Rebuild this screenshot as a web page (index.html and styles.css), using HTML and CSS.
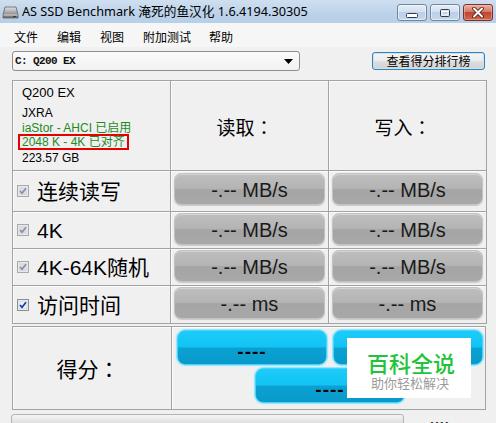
FILE: index.html
```html
<!DOCTYPE html>
<html lang="zh">
<head>
<meta charset="utf-8">
<title>AS SSD Benchmark</title>
<link rel="stylesheet" href="styles.css">
</head>
<body>
<div class="window">
  <div class="titlebar">
    <svg class="appicon" width="17" height="16" viewBox="0 0 17 16">
      <defs>
        <linearGradient id="hd" x1="0" y1="0" x2="0" y2="1">
          <stop offset="0" stop-color="#e4e4e4"/>
          <stop offset="0.6" stop-color="#9a9a9a"/>
          <stop offset="1" stop-color="#6a6a6a"/>
        </linearGradient>
      </defs>
      <path d="M3 3 L14 3 L16 11 L16 14 L1 14 L1 11 Z" fill="url(#hd)" stroke="#5f5f5f" stroke-width="0.8"/>
      <path d="M1.5 11 L15.5 11" stroke="#d8d8d8" stroke-width="1"/>
      <rect x="11" y="12" width="3" height="1" fill="#3a3a3a"/>
    </svg>
    <span class="title">AS SSD Benchmark 淹死的鱼汉化 1.6.4194.30305</span>
    <div class="winbtns">
      <div class="wb">
        <svg width="12" height="6" viewBox="0 0 12 6"><rect x="0.5" y="1.5" width="11" height="4" rx="1" fill="#fff" stroke="#2a3d55"/></svg>
      </div>
      <div class="wb">
        <svg width="12" height="10" viewBox="0 0 12 10"><rect x="1.5" y="1.5" width="9" height="7" rx="1" fill="none" stroke="#2a3d55" stroke-width="1"/><rect x="3" y="3.5" width="6" height="3.5" fill="none" stroke="#fff" stroke-width="1"/></svg>
      </div>
      <div class="wb close">
        <svg width="14" height="11" viewBox="0 0 14 11"><path d="M3 1.5 L11 9.5 M11 1.5 L3 9.5" stroke="#4a1a12" stroke-width="3.6" stroke-linecap="round"/><path d="M3 1.5 L11 9.5 M11 1.5 L3 9.5" stroke="#fff" stroke-width="2" stroke-linecap="round"/></svg>
      </div>
    </div>
  </div>

  <div class="menubar">
    <span class="mi">文件</span>
    <span class="mi">编辑</span>
    <span class="mi">视图</span>
    <span class="mi">附加测试</span>
    <span class="mi">帮助</span>
  </div>

  <div class="toolbar">
    <div class="combo">
      <span class="combo-text">C: Q200 EX</span>
      <svg class="arrow" width="9" height="5" viewBox="0 0 9 5"><path d="M0 0 L9 0 L4.5 5 Z" fill="#000"/></svg>
    </div>
    <div class="rank">查看得分排行榜</div>
  </div>

  <div class="results">
    <div class="cell info">
      <div class="model">Q200 EX</div>
      <div class="line">JXRA</div>
      <div class="line green">iaStor - AHCI 已启用</div>
      <div class="line green boxed">2048 K - 4K 已对齐</div>
      <div class="line">223.57 GB</div>
    </div>
    <div class="cell head">读取<span class="colon">：</span></div>
    <div class="cell head">写入<span class="colon">：</span></div>

    <div class="cell label">
      <svg class="chk" width="12" height="12" viewBox="0 0 12 12"><rect x="0.5" y="0.5" width="11" height="11" fill="#e8e8e8" stroke="#a9a9a9"/><rect x="2" y="2" width="8" height="8" fill="#dcdcdc"/><path d="M3 6 L5 8.3 L9 3.3" fill="none" stroke="#7d8db5" stroke-width="1.6"/></svg>
      <span>连续读写</span>
    </div>
    <div class="cell val first"><div class="gbtn">-.-- MB/s</div></div>
    <div class="cell val first"><div class="gbtn">-.-- MB/s</div></div>

    <div class="cell label">
      <svg class="chk" width="12" height="12" viewBox="0 0 12 12"><rect x="0.5" y="0.5" width="11" height="11" fill="#e8e8e8" stroke="#a9a9a9"/><rect x="2" y="2" width="8" height="8" fill="#dcdcdc"/><path d="M3 6 L5 8.3 L9 3.3" fill="none" stroke="#7d8db5" stroke-width="1.6"/></svg>
      <span>4K</span>
    </div>
    <div class="cell val"><div class="gbtn">-.-- MB/s</div></div>
    <div class="cell val"><div class="gbtn">-.-- MB/s</div></div>

    <div class="cell label">
      <svg class="chk" width="12" height="12" viewBox="0 0 12 12"><rect x="0.5" y="0.5" width="11" height="11" fill="#e8e8e8" stroke="#a9a9a9"/><rect x="2" y="2" width="8" height="8" fill="#dcdcdc"/><path d="M3 6 L5 8.3 L9 3.3" fill="none" stroke="#7d8db5" stroke-width="1.6"/></svg>
      <span>4K-64K随机</span>
    </div>
    <div class="cell val"><div class="gbtn">-.-- MB/s</div></div>
    <div class="cell val"><div class="gbtn">-.-- MB/s</div></div>

    <div class="cell label">
      <svg class="chk" width="12" height="12" viewBox="0 0 12 12"><rect x="0.5" y="0.5" width="11" height="11" fill="#f4f4f4" stroke="#8e8f8f"/><rect x="2" y="2" width="8" height="8" fill="#eaf0fa" stroke="#b9c7de" stroke-width="0.6"/><path d="M3 6 L5 8.3 L9 3.3" fill="none" stroke="#1f3f95" stroke-width="1.7"/></svg>
      <span>访问时间</span>
    </div>
    <div class="cell val"><div class="gbtn">-.-- ms</div></div>
    <div class="cell val"><div class="gbtn">-.-- ms</div></div>
  </div>

  <div class="score">
    <div class="cell score-label">得分<span class="colon">：</span></div>
    <div class="cell score-vals">
      <div class="brow">
        <div class="bbtn">----</div>
        <div class="bbtn">----</div>
      </div>
      <div class="brow second">
        <div class="bbtn">----</div>
      </div>
    </div>
  </div>

  <div class="bottom">
    <div class="progress"></div>
    <span class="tail">∙∙∙∙</span>
  </div>

  <div class="watermark">
    <div class="wm-main">百科全说</div>
    <div class="wm-sub">助你轻松解决</div>
  </div>
</div>
</body>
</html>
```

FILE: styles.css
```css
html, body {
  margin: 0;
  padding: 0;
}
body {
  background: #f0f0f0;
  font-family: "Liberation Sans", "Noto Sans CJK SC", sans-serif;
  color: #000;
}
.window {
  position: relative;
  width: 496px;
  height: 423px;
  overflow: hidden;
  background: #f0f0f0;
}

/* title bar */
.titlebar {
  height: 23px;
  display: flex;
  align-items: center;
  padding-left: 2px;
  background: linear-gradient(#cfdff0, #bcd2ea 60%, #b8cfe8);
}
.appicon {
  margin-right: 3px;
  margin-top: 1px;
}
.title {
  font-family: "Noto Sans", "Noto Sans CJK SC", sans-serif;
  font-size: 12.7px;
  line-height: 1;
  color: #000;
  white-space: nowrap;
}
.winbtns {
  margin-left: auto;
  margin-right: 3px;
  display: flex;
  gap: 3px;
  align-self: flex-start;
  margin-top: 4px;
}
.wb {
  width: 30px;
  height: 17px;
  box-sizing: border-box;
  border: 1px solid #71879f;
  border-radius: 3px;
  background: linear-gradient(#e6eef8, #d3e0ef 45%, #bccfe6 50%, #c6d7ec);
  box-shadow: inset 0 0 0 1px rgba(255,255,255,0.5);
  display: flex;
  align-items: center;
  justify-content: center;
}
.wb:first-child svg {
  margin-top: 5px;
}
.wb.close {
  border-color: #7a3127;
  background: linear-gradient(#eab0a3, #d67a66 45%, #c2442e 50%, #cf6a4e);
  box-shadow: inset 0 0 0 1px rgba(255,200,190,0.45);
}

/* menu */
.menubar {
  height: 24px;
  display: flex;
  align-items: center;
  padding-left: 4px;
  background: #f6f6f6;
}
.mi {
  font-family: "Noto Sans CJK SC", sans-serif;
  font-size: 12px;
  line-height: 1;
  padding: 0 10px;
  margin-top: 3px;
  margin-right: -1px;
}
.mi:nth-child(4) {
  margin-right: -2px;
}

/* toolbar */
.toolbar {
  margin-top: 4px;
  height: 20px;
  display: flex;
  align-items: center;
  padding-left: 12px;
}
.combo {
  width: 288px;
  height: 20px;
  box-sizing: border-box;
  border: 1px solid #8f8f8f;
  border-radius: 3px;
  background: linear-gradient(#fbfbfb, #f1f1f1);
  display: flex;
  align-items: center;
  padding: 0 3px 0 2px;
}
.combo-text {
  font-family: "Liberation Mono", monospace;
  font-size: 11px;
  letter-spacing: -0.6px;
  line-height: 1;
  font-weight: bold;
  color: #111;
}
.arrow {
  margin-left: auto;
  margin-right: 3px;
}
.rank {
  margin-left: 72px;
  width: 113px;
  height: 18px;
  box-sizing: border-box;
  border: 1px solid #3c7fb1;
  border-radius: 3px;
  background: linear-gradient(#f4f4f4, #ececec 48%, #dedede 52%, #d2d2d2);
  box-shadow: inset 0 0 0 1px #c5e6f8;
  font-family: "Noto Sans CJK SC", sans-serif;
  font-size: 12px;
  line-height: 16px;
  text-align: center;
}

/* results grid */
.results {
  margin: 9px 0 0 12px;
  display: grid;
  grid-template-columns: 157px 157px 157px;
  grid-template-rows: 89px 40px 36px 36px 37px;
  gap: 1px;
  padding: 1px;
  width: max-content;
  background: #a3a3a3;
}
.cell {
  background: #f0f0f0;
  box-shadow: inset 1px 1px 0 #fbfbfb;
}
.info {
  padding: 4px 0 0 9px;
  font-size: 12px;
}
.model {
  font-size: 13px;
  line-height: 16px;
  margin-bottom: 5px;
}
.line {
  line-height: 15px;
  height: 15px;
  white-space: nowrap;
}
.green {
  color: #1f8a1f;
}
.boxed {
  width: fit-content;
  height: 12px;
  line-height: 12px;
  border: 2px solid #e60000;
  padding: 0 2px;
  margin: -2px 0 1px -4px;
}
.head {
  display: flex;
  align-items: center;
  justify-content: center;
  font-family: "Noto Sans CJK SC", sans-serif;
  font-size: 19px;
  padding-top: 2px;
  padding-right: 9px;
}
.colon {
  font-family: "Noto Sans CJK TC", sans-serif;
}
.label {
  display: flex;
  align-items: center;
  padding-left: 4px;
  gap: 8px;
  font-family: "Liberation Sans", "Noto Sans CJK SC", sans-serif;
  font-size: 21px;
}
.label span {
  line-height: 1;
  margin-top: 1px;
}
.chk {
  flex: none;
}
.val {
  padding: 1px 3px 0 3px;
}
.val.first {
  padding-top: 2px;
}
.gbtn {
  height: 32px;
  box-sizing: border-box;
  border: 1px solid #c2c2c2;
  border-radius: 7px;
  background: linear-gradient(#bebebe, #b4b4b4 48%, #a5a5a5 52%, #a8a8a8);
  box-shadow: inset 0 1px 0 rgba(255,255,255,0.35), 0 1px 1px #c8c8c8;
  display: flex;
  align-items: center;
  justify-content: center;
  font-family: "Liberation Sans", sans-serif;
  font-size: 20px;
  color: #1a1a1a;
  padding-top: 3px;
}

/* score */
.score {
  margin: 2px 0 0 12px;
  width: 474px;
  height: 84px;
  box-sizing: border-box;
  display: grid;
  grid-template-columns: 158px 1fr;
  gap: 1px;
  padding: 1px;
  background: #a3a3a3;
}
.score-label {
  display: flex;
  align-items: center;
  justify-content: center;
  font-family: "Noto Sans CJK SC", sans-serif;
  font-size: 21px;
  padding-right: 8px;
}
.score-vals {
  padding: 3px 0 0 5px;
  display: flex;
  flex-direction: column;
  gap: 3px;
}
.brow {
  display: flex;
  gap: 6px;
}
.brow.second {
  padding-left: 78px;
}
.bbtn {
  width: 150px;
  height: 35px;
  box-sizing: border-box;
  border: 1px solid #48d3fb;
  border-radius: 8px;
  background: linear-gradient(#1ccbf8, #12c3f4 48%, #0aa2d3 52%, #0899ca);
  box-shadow: 0 0 1px 1px #8ee4fd;
  display: flex;
  align-items: center;
  justify-content: center;
  font-family: "Liberation Sans", sans-serif;
  font-weight: bold;
  font-size: 19px;
  letter-spacing: 1px;
  color: #000;
  padding-top: 8px;
}

/* bottom */
.bottom {
  margin-top: 4px;
  padding-left: 11px;
  display: flex;
  align-items: flex-start;
}
.progress {
  width: 393px;
  height: 14px;
  box-sizing: border-box;
  border: 1px solid #b4b4b4;
  border-radius: 3px;
  background: linear-gradient(#f6f6f6, #e4e4e4 50%, #d6d6d6);
}
.tail {
  margin-left: 26px;
  margin-top: 2px;
  font-family: "Liberation Sans", sans-serif;
  font-size: 14px;
  font-weight: bold;
  line-height: 1;
  letter-spacing: 1px;
  color: #222;
}

/* watermark overlay */
.watermark {
  position: absolute;
  left: 347px;
  top: 338px;
  width: 124px;
  height: 60px;
  background: #fff;
  display: flex;
  flex-direction: column;
  align-items: center;
  font-family: "Noto Sans CJK SC", sans-serif;
}
.wm-main {
  margin-top: 12px;
  font-size: 22px;
  line-height: 24px;
  color: #1fc43a;
  font-weight: 500;
  padding-left: 4px;
}
.wm-sub {
  margin-top: 1px;
  font-size: 13px;
  line-height: 16px;
  color: #9b9b9b;
  padding-left: 2px;
}
```
